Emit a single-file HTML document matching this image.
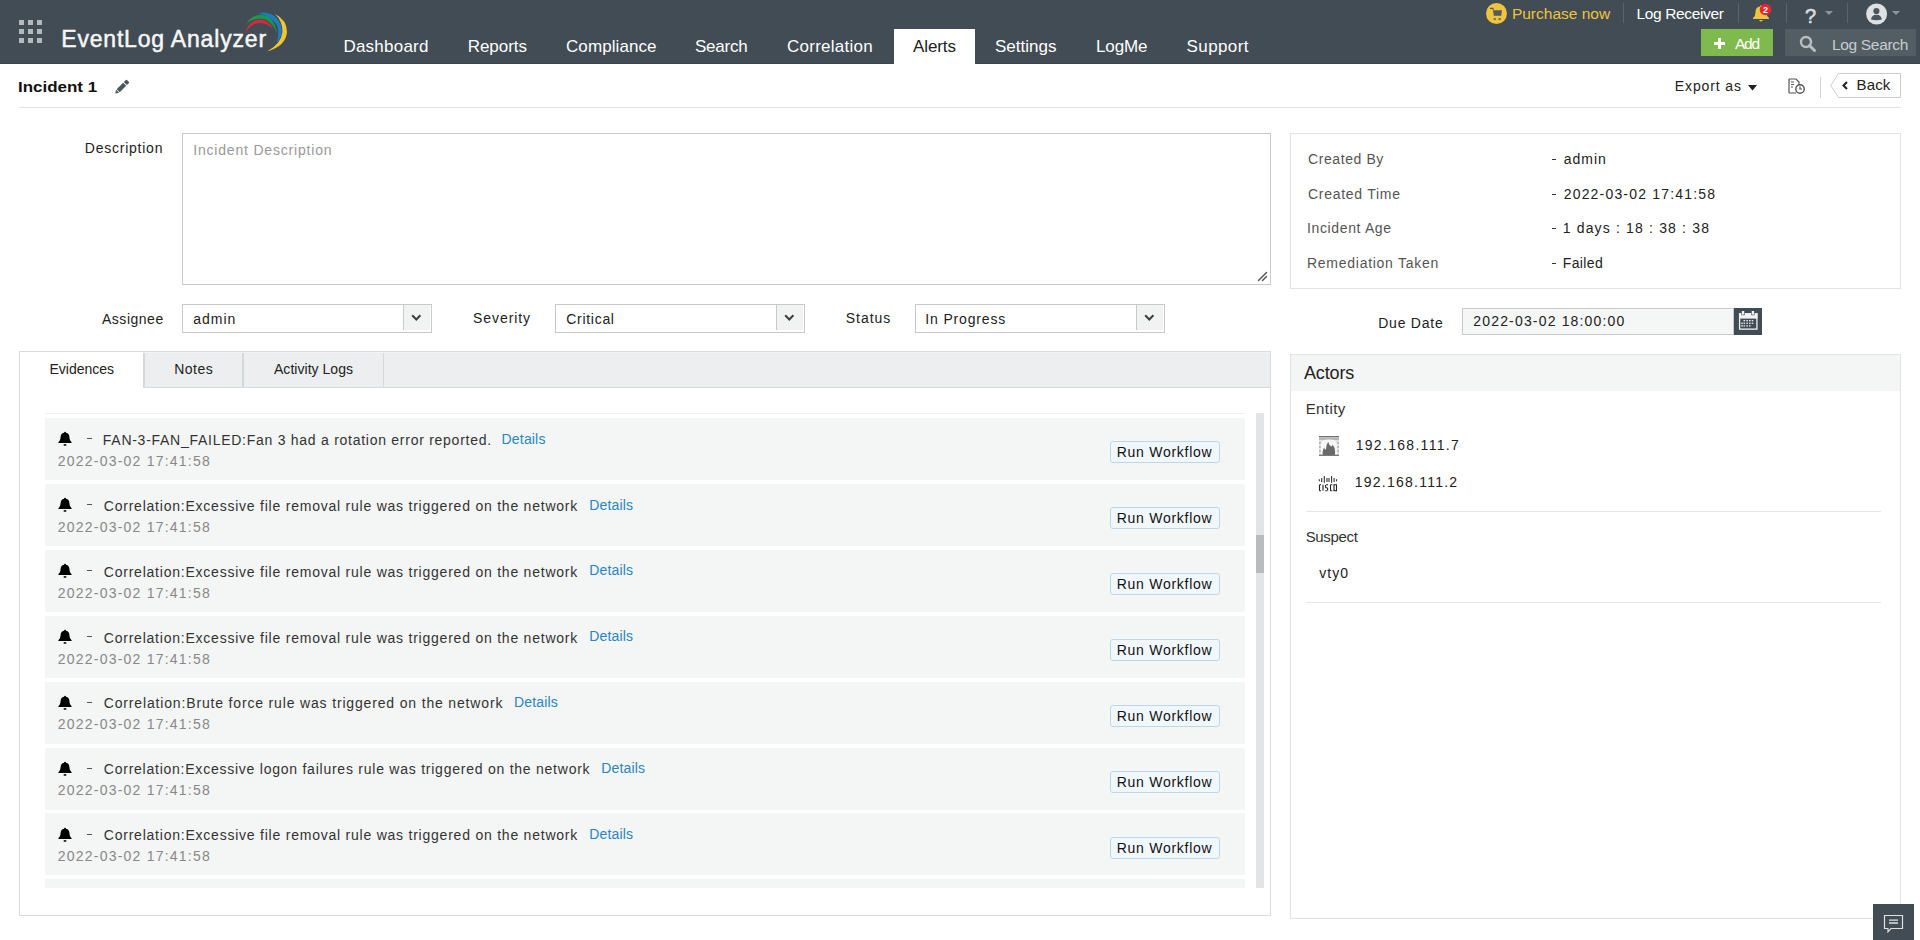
<!DOCTYPE html>
<html><head><meta charset="utf-8"><style>
html,body{margin:0;padding:0;width:1920px;height:940px;overflow:hidden;background:#fff;font-family:"Liberation Sans", sans-serif;}
.t{position:absolute;white-space:nowrap;line-height:1;}
.r{position:absolute;}
</style></head><body>
<div class="r" style="left:0px;top:0px;width:1920px;height:64px;background:#414c54"></div>
<div class="r" style="left:0px;top:63px;width:1920px;height:1px;background:#3a444b"></div>
<div class="r" style="left:19px;top:20px;width:5px;height:5px;background:#b4b9bc"></div>
<div class="r" style="left:28px;top:20px;width:5px;height:5px;background:#b4b9bc"></div>
<div class="r" style="left:37px;top:20px;width:5px;height:5px;background:#b4b9bc"></div>
<div class="r" style="left:19px;top:29px;width:5px;height:5px;background:#b4b9bc"></div>
<div class="r" style="left:28px;top:29px;width:5px;height:5px;background:#b4b9bc"></div>
<div class="r" style="left:37px;top:29px;width:5px;height:5px;background:#b4b9bc"></div>
<div class="r" style="left:19px;top:38px;width:5px;height:5px;background:#b4b9bc"></div>
<div class="r" style="left:28px;top:38px;width:5px;height:5px;background:#b4b9bc"></div>
<div class="r" style="left:37px;top:38px;width:5px;height:5px;background:#b4b9bc"></div>
<div class="t" style="left:61.25px;top:27.53px;font-size:23px;color:#f6f6f6;letter-spacing:0.812px;-webkit-text-stroke:0.5px #f6f6f6;">EventLog Analyzer</div>
<svg class="r" style="left:240px;top:8px" width="52" height="48" viewBox="240 8 52 48">
<path d="M245.3 34 Q248.5 20 259.5 19.6 Q268 19.5 273.5 29 Q267 23 259.5 23 Q250 23.5 245.3 34Z" fill="#d42a3c"/>
<path d="M246 24 Q252 14.8 261 14.8 Q273.5 15.3 277 33 Q271 19 261 18.6 Q252 18.3 246 24Z" fill="#169b4e"/>
<path d="M258 13 Q265 11.5 271 14 Q281 19 282 31 Q281.5 38 276.5 43 Q279 36 278 28.5 Q275 18 258 13Z" fill="#1b7cc0"/>
<path d="M275 14 Q287 20 287 32 Q286 46 267 51.5 Q281 44 282.5 32 Q282.5 21 275 14Z" fill="#f3c52e"/>
</svg>
<div class="r" style="left:894px;top:29px;width:81px;height:35px;background:#fff"></div>
<div class="t" style="left:343.40px;top:37.61px;font-size:17px;color:#fff;letter-spacing:0.238px;">Dashboard</div>
<div class="t" style="left:467.70px;top:37.61px;font-size:17px;color:#fff;letter-spacing:-0.033px;">Reports</div>
<div class="t" style="left:566.00px;top:37.61px;font-size:17px;color:#fff;letter-spacing:0.083px;">Compliance</div>
<div class="t" style="left:695.00px;top:37.61px;font-size:17px;color:#fff;letter-spacing:-0.250px;">Search</div>
<div class="t" style="left:787.00px;top:37.61px;font-size:17px;color:#fff;letter-spacing:0.250px;">Correlation</div>
<div class="t" style="left:913.00px;top:37.61px;font-size:17px;color:#222;letter-spacing:-0.100px;">Alerts</div>
<div class="t" style="left:995.00px;top:37.61px;font-size:17px;color:#fff;">Settings</div>
<div class="t" style="left:1096.00px;top:37.61px;font-size:17px;color:#fff;letter-spacing:-0.125px;">LogMe</div>
<div class="t" style="left:1186.50px;top:37.61px;font-size:17px;color:#fff;letter-spacing:0.417px;">Support</div>
<svg class="r" style="left:1486px;top:3px" width="22" height="22" viewBox="0 0 22 22">
<circle cx="10.5" cy="10.5" r="10.5" fill="#f0c43c"/>
<path d="M4 5.4 L6.8 5.4 L7.4 7" fill="none" stroke="#4f5a61" stroke-width="1.2"/>
<path d="M7 7.3 L16 7.3 L15.2 12.8 L7.8 12.8 Z" fill="#4f5a61"/>
<rect x="7.6" y="15.2" width="2.2" height="1.6" fill="#4f5a61"/><rect x="12.6" y="15.2" width="2.2" height="1.6" fill="#4f5a61"/>
</svg>
<div class="t" style="left:1511.90px;top:6.08px;font-size:15.5px;color:#f0c43c;">Purchase now</div>
<div class="r" style="left:1623px;top:3px;width:1px;height:20px;background:#5a646b"></div>
<div class="t" style="left:1636.50px;top:6.08px;font-size:15.5px;color:#fff;letter-spacing:-0.364px;">Log Receiver</div>
<div class="r" style="left:1738px;top:3px;width:1px;height:20px;background:#5a646b"></div>
<svg class="r" style="left:1750px;top:2px" width="24" height="22" viewBox="0 0 24 22">
<path d="M3 17 L3 16 Q5.5 14 5.5 10 Q5.5 5 10 4.5 L10 3.5 L12 3.5 L12 4.5 Q16.5 5 16.5 10 Q16.5 14 19 16 L19 17 Z" fill="#f0c43c"/>
<path d="M9 18 Q11 21 13 18Z" fill="#f0c43c"/>
<circle cx="15.5" cy="7.5" r="5.8" fill="#e8262f"/>
<text x="15.5" y="10.6" font-family="Liberation Sans" font-size="9" font-weight="700" fill="#fff" text-anchor="middle">2</text>
</svg>
<div class="r" style="left:1786px;top:3px;width:1px;height:20px;background:#5a646b"></div>
<div class="t" style="left:1805.00px;top:5.67px;font-size:20px;color:#d8dcdf;-webkit-text-stroke:0.6px #d8dcdf;">?</div>
<svg class="r" style="left:1825px;top:11px" width="10" height="5"><path d="M0 0 L8 0 L4 4Z" fill="#8d959a"/></svg>
<div class="r" style="left:1847px;top:3px;width:1px;height:20px;background:#5a646b"></div>
<svg class="r" style="left:1865px;top:2px" width="24" height="24" viewBox="0 0 24 24">
<circle cx="11.6" cy="12" r="10.5" fill="#dde1e4"/>
<circle cx="11.4" cy="9" r="3.1" fill="#4a555d"/>
<path d="M6 17.5 Q6.5 12.8 11.4 12.8 Q16.3 12.8 16.8 17.5 Q14.5 18.3 11.4 18.3 Q8.3 18.3 6 17.5Z" fill="#4a555d"/>
</svg>
<svg class="r" style="left:1892px;top:11px" width="10" height="5"><path d="M0 0 L8 0 L4 4Z" fill="#8d959a"/></svg>
<div class="r" style="left:1701px;top:29px;width:72px;height:27px;background:#7fba4f"></div>
<svg class="r" style="left:1714px;top:38px" width="11" height="11"><path d="M4 0h3v4h4v3h-4v4h-3v-4h-4v-3h4z" fill="#fff"/></svg>
<div class="t" style="left:1735.00px;top:36.38px;font-size:15.5px;color:#fff;letter-spacing:-1.250px;">Add</div>
<div class="r" style="left:1785px;top:29px;width:131px;height:27px;background:#525d64"></div>
<svg class="r" style="left:1799px;top:35px" width="18" height="18" viewBox="0 0 18 18">
<circle cx="7" cy="7" r="5" fill="none" stroke="#b9bec2" stroke-width="2.4"/>
<path d="M10.5 10.5 L15.5 15.5" stroke="#b9bec2" stroke-width="3" stroke-linecap="round"/>
</svg>
<div class="t" style="left:1832.00px;top:36.88px;font-size:15.5px;color:#c9cdd0;letter-spacing:-0.333px;">Log Search</div>
<div class="t" style="left:18.29px;top:80.15px;font-size:14px;color:#111;font-weight:700;transform:scaleX(1.2109);transform-origin:0 0;">Incident 1</div>
<svg class="r" style="left:110px;top:76px" width="24" height="24" viewBox="0 0 24 24"><path d="M5.30 17.60 L6.04 13.82 L9.08 16.86Z M6.68 13.18 L13.18 6.68 L16.22 9.72 L9.72 16.22Z M13.82 6.04 L16.22 3.63 L17.00 3.99 L18.91 5.90 L19.27 6.68 L16.86 9.08Z" fill="#4a555d"/></svg>
<div class="r" style="left:19px;top:107px;width:1882px;height:1px;background:#e0e0e0"></div>
<div class="t" style="left:1674.80px;top:79.45px;font-size:14px;color:#222;letter-spacing:0.875px;">Export as</div>
<svg class="r" style="left:1748px;top:85px" width="10" height="6"><path d="M0 0 L9 0 L4.5 5.5Z" fill="#222"/></svg>
<svg class="r" style="left:1788px;top:78px" width="18" height="16" viewBox="0 0 18 16">
<path d="M1 1 L8 1 L11 4 L11 7 M8 15 L1 15 Z" fill="none" stroke="#555" stroke-width="1.2"/>
<path d="M1 1 L1 15" stroke="#555" stroke-width="1.2"/>
<path d="M3 4h3M3 6.5h3M3 9h2" stroke="#555" stroke-width="1.2"/>
<circle cx="12" cy="11" r="4.2" fill="#fff" stroke="#555" stroke-width="1.4"/>
<path d="M12 8.5 L12 11 L14 11" fill="none" stroke="#555" stroke-width="1.2"/>
</svg>
<div class="r" style="left:1820px;top:77px;width:1px;height:21px;background:#d5d5d5"></div>
<svg class="r" style="left:1830px;top:73px" width="72" height="25" viewBox="0 0 72 25">
<path d="M8.5 0.5 L70.5 0.5 L70.5 24.5 L8.5 24.5 L0.8 12.5 Z" fill="#fff" stroke="#ccc" stroke-width="1"/>
<path d="M17 9 L13.5 12.5 L17 16" fill="none" stroke="#222" stroke-width="2"/>
</svg>
<div class="t" style="left:1856.50px;top:77.30px;font-size:15px;color:#222;letter-spacing:0.167px;">Back</div>
<div class="t" style="left:84.80px;top:141.35px;font-size:14px;color:#222;letter-spacing:0.760px;">Description</div>
<div class="r" style="left:182px;top:133px;width:1089px;height:152px;background:#fff;border:1px solid #c9c9c9;box-sizing:border-box"></div>
<div class="t" style="left:193.20px;top:143.35px;font-size:14px;color:#999;letter-spacing:0.811px;">Incident Description</div>
<svg class="r" style="left:1256px;top:270px" width="12" height="12"><path d="M10.5 2.5 L2.5 10.5 M10.5 6.5 L6.5 10.5" stroke="#555" stroke-width="1.5" stroke-linecap="round"/></svg>
<div class="t" style="left:102.00px;top:312.15px;font-size:14px;color:#222;letter-spacing:0.514px;">Assignee</div>
<div class="r" style="left:182px;top:304px;width:250px;height:29px;background:#fff;border:1px solid #c9c9c9;box-sizing:border-box"></div>
<div class="r" style="left:403px;top:304px;width:1px;height:26px;background:#c9c9c9"></div>
<div class="r" style="left:404px;top:305px;width:26px;height:25px;background:#f1f2f2"></div>
<svg class="r" style="left:411px;top:314px" width="12" height="8"><path d="M1.2 1.2 L5.3 5.5 L9.4 1.2" fill="none" stroke="#3a3f42" stroke-width="2"/></svg>
<div class="t" style="left:193.30px;top:312.15px;font-size:14px;color:#222;letter-spacing:0.950px;">admin</div>
<div class="t" style="left:473.10px;top:311.15px;font-size:14px;color:#222;letter-spacing:0.914px;">Severity</div>
<div class="r" style="left:555px;top:304px;width:250px;height:29px;background:#fff;border:1px solid #c9c9c9;box-sizing:border-box"></div>
<div class="r" style="left:776px;top:304px;width:1px;height:26px;background:#c9c9c9"></div>
<div class="r" style="left:777px;top:305px;width:26px;height:25px;background:#f1f2f2"></div>
<svg class="r" style="left:784px;top:314px" width="12" height="8"><path d="M1.2 1.2 L5.3 5.5 L9.4 1.2" fill="none" stroke="#3a3f42" stroke-width="2"/></svg>
<div class="t" style="left:566.30px;top:312.15px;font-size:14px;color:#222;letter-spacing:0.700px;">Critical</div>
<div class="t" style="left:845.80px;top:311.15px;font-size:14px;color:#222;letter-spacing:0.960px;">Status</div>
<div class="r" style="left:915px;top:304px;width:250px;height:29px;background:#fff;border:1px solid #c9c9c9;box-sizing:border-box"></div>
<div class="r" style="left:1136px;top:304px;width:1px;height:26px;background:#c9c9c9"></div>
<div class="r" style="left:1137px;top:305px;width:26px;height:25px;background:#f1f2f2"></div>
<svg class="r" style="left:1144px;top:314px" width="12" height="8"><path d="M1.2 1.2 L5.3 5.5 L9.4 1.2" fill="none" stroke="#3a3f42" stroke-width="2"/></svg>
<div class="t" style="left:925.30px;top:312.15px;font-size:14px;color:#222;letter-spacing:0.840px;">In Progress</div>
<div class="r" style="left:1290px;top:133px;width:611px;height:156px;border:1px solid #e3e3e3;box-sizing:border-box"></div>
<div class="t" style="left:1308.00px;top:152.45px;font-size:14px;color:#555;letter-spacing:0.589px;">Created By</div>
<div class="r" style="left:1552px;top:159px;width:4px;height:1px;background:#333"></div>
<div class="t" style="left:1563.70px;top:152.45px;font-size:14px;color:#222;letter-spacing:1.000px;">admin</div>
<div class="t" style="left:1308.00px;top:187.15px;font-size:14px;color:#555;letter-spacing:0.718px;">Created Time</div>
<div class="r" style="left:1552px;top:194px;width:4px;height:1px;background:#333"></div>
<div class="t" style="left:1563.70px;top:187.15px;font-size:14px;color:#222;letter-spacing:1.183px;">2022-03-02 17:41:58</div>
<div class="t" style="left:1307.00px;top:221.35px;font-size:14px;color:#555;letter-spacing:0.636px;">Incident Age</div>
<div class="r" style="left:1552px;top:228px;width:4px;height:1px;background:#333"></div>
<div class="t" style="left:1562.70px;top:221.35px;font-size:14px;color:#222;letter-spacing:1.165px;">1 days : 18 : 38 : 38</div>
<div class="t" style="left:1307.00px;top:256.45px;font-size:14px;color:#555;letter-spacing:0.731px;">Remediation Taken</div>
<div class="r" style="left:1552px;top:263px;width:4px;height:1px;background:#333"></div>
<div class="t" style="left:1562.70px;top:256.45px;font-size:14px;color:#222;letter-spacing:0.400px;">Failed</div>
<div class="t" style="left:1378.20px;top:316.45px;font-size:14px;color:#222;letter-spacing:0.771px;">Due Date</div>
<div class="r" style="left:1462px;top:308px;width:272px;height:27px;background:#f5f6f6;border:1px solid #c9c9c9;box-sizing:border-box"></div>
<div class="r" style="left:1734px;top:308px;width:28px;height:27px;background:#414c54"></div>
<svg class="r" style="left:1734px;top:308px" width="28" height="27" viewBox="0 0 28 27">
<rect x="5.6" y="5.8" width="17.3" height="15.3" fill="none" stroke="#f2f2f2" stroke-width="1.3"/>
<rect x="5" y="5.3" width="18.5" height="5.3" fill="#f2f2f2"/>
<rect x="7.3" y="2.6" width="3.4" height="4.6" fill="#414c54"/><rect x="17.2" y="2.6" width="3.4" height="4.6" fill="#414c54"/>
<rect x="7.8" y="3" width="2.4" height="3.6" fill="#f2f2f2"/><rect x="17.7" y="3" width="2.4" height="3.6" fill="#f2f2f2"/>
<g fill="#e8eaeb">
<rect x="9.5" y="12" width="1.6" height="1.3"/><rect x="12.3" y="12" width="1.6" height="1.3"/><rect x="15" y="12" width="1.6" height="1.3"/><rect x="17.7" y="12" width="1.6" height="1.3"/>
<rect x="7.2" y="14.6" width="1.6" height="1.3"/><rect x="9.5" y="14.6" width="1.6" height="1.3"/><rect x="12.3" y="14.6" width="1.6" height="1.3"/><rect x="15" y="14.6" width="1.6" height="1.3"/><rect x="17.7" y="14.6" width="1.6" height="1.3"/>
<rect x="7.2" y="17.2" width="1.6" height="1.3"/><rect x="9.5" y="17.2" width="1.6" height="1.3"/><rect x="12.3" y="17.2" width="1.6" height="1.3"/><rect x="15" y="17.2" width="1.6" height="1.3"/>
</g>
</svg>
<div class="t" style="left:1473.30px;top:313.95px;font-size:14px;color:#222;letter-spacing:1.167px;">2022-03-02 18:00:00</div>
<div class="r" style="left:1290px;top:354px;width:611px;height:565px;border:1px solid #e3e3e3;box-sizing:border-box"></div>
<div class="r" style="left:1291px;top:355px;width:609px;height:36px;background:#f4f5f5"></div>
<div class="t" style="left:1304.00px;top:364.06px;font-size:18px;color:#222;letter-spacing:-0.140px;">Actors</div>
<div class="t" style="left:1305.70px;top:401.30px;font-size:15px;color:#333;letter-spacing:0.400px;">Entity</div>
<svg class="r" style="left:1319px;top:436px" width="20" height="20" viewBox="0 0 20 20">
<rect x="0" y="0" width="20" height="20" rx="1" fill="#e2e2e2"/>
<rect x="0" y="0" width="20" height="1.3" fill="#707070"/>
<path d="M0 3h20M0 7h3M17 7h3M0 11h2.5M17.5 11h2.5M0 15h3M17 15h3" stroke="#8a8a8a" stroke-width="1.1"/>
<path d="M1.8 19 L1.8 7.5 Q2.5 3.6 10 3.6 Q17.5 3.6 18.2 7.5 L18.2 19Z" fill="#f6f6f6"/>
<rect x="0" y="18.6" width="20" height="1.4" fill="#7a7a7a"/>
<path d="M3.8 19 Q3.2 14 5.2 11.5 Q5.8 14.5 7 13 Q7.2 8.5 9.2 5.8 Q10 9.5 11.8 10 Q12.6 11.5 13.6 8.8 Q17 12.5 15.8 19Z" fill="#6a6a6a"/>
</svg>
<div class="t" style="left:1355.70px;top:438.15px;font-size:14px;color:#222;letter-spacing:1.300px;">192.168.111.7</div>
<svg class="r" style="left:1318px;top:475px" width="21" height="17" viewBox="0 0 21 17">
<path d="M1.3 4.2v2M3.7 3v4M6.3 1v6.8M9 3v4M11 3v4M13.6 1v6.8M16.1 3v4M18.5 4.2v2" stroke="#333" stroke-width="1.1"/>
<path d="M1.5 9.8 L1.5 15.8 M1.5 9.8h1.5M1.5 15.8h1.5 M5 9.8v6 M7.5 10v2.5 M8 9.8h2 M7.2 15.8h2 M9.6 13v2.5 M7.5 12.8h2 M12.5 9.8v6 M12.5 9.8h1.8 M12.5 15.8h1.8 M16 9.8h2.5v6h-2.5z" fill="none" stroke="#222" stroke-width="1.1"/>
</svg>
<div class="t" style="left:1354.70px;top:475.45px;font-size:14px;color:#222;letter-spacing:1.250px;">192.168.111.2</div>
<div class="r" style="left:1306px;top:511px;width:575px;height:1px;background:#e6e6e6"></div>
<div class="t" style="left:1305.70px;top:529.00px;font-size:15px;color:#333;letter-spacing:-0.333px;">Suspect</div>
<div class="t" style="left:1319.30px;top:566.45px;font-size:14px;color:#222;letter-spacing:1.000px;">vty0</div>
<div class="r" style="left:1306px;top:602px;width:575px;height:1px;background:#e6e6e6"></div>
<div class="r" style="left:19px;top:351px;width:1252px;height:565px;border:1px solid #d8dcde;box-sizing:border-box"></div>
<div class="r" style="left:20px;top:352px;width:1250px;height:36px;background:#eceeef;border-bottom:1px solid #d5dadd;box-sizing:border-box"></div>
<div class="r" style="left:20px;top:352px;width:123px;height:36px;background:#fff"></div>
<div class="r" style="left:143px;top:352px;width:1127px;height:1px;background:#f2f3f4"></div>
<div class="r" style="left:143px;top:353px;width:2px;height:34px;background:#d3d8db"></div>
<div class="r" style="left:242px;top:353px;width:2px;height:34px;background:#d3d8db"></div>
<div class="r" style="left:383px;top:353px;width:1px;height:34px;background:#d3d8db"></div>
<div class="t" style="left:49.50px;top:361.75px;font-size:14px;color:#222;letter-spacing:-0.012px;">Evidences</div>
<div class="t" style="left:174.30px;top:361.75px;font-size:14px;color:#222;letter-spacing:0.450px;">Notes</div>
<div class="t" style="left:274.00px;top:361.75px;font-size:14px;color:#222;letter-spacing:0.033px;">Activity Logs</div>
<div class="r" style="left:45px;top:413px;width:1200px;height:1px;background:#eef0f0"></div>
<div class="r" style="left:45px;top:418px;width:1200px;height:62px;background:#f4f5f5"></div>
<svg class="r" style="left:58px;top:431.20px" width="14" height="16" viewBox="0 0 14 16">
<path d="M0.4 12.1 L0.4 11.3 Q2.6 9.6 2.6 6.3 Q2.6 2.4 6 1.8 L6.3 0.9 Q7 0.5 7.7 0.9 L8 1.8 Q11.4 2.4 11.4 6.3 Q11.4 9.6 13.6 11.3 L13.6 12.1Z" fill="#000"/>
<ellipse cx="7" cy="13.9" rx="1.5" ry="0.9" fill="#111"/></svg>
<div class="r" style="left:87px;top:438px;width:5px;height:1px;background:#555"></div>
<div class="t" style="left:102.80px;top:433.25px;font-size:14px;color:#333;letter-spacing:0.733px;">FAN-3-FAN_FAILED:Fan 3 had a rotation error reported.</div>
<div class="t" style="left:501.60px;top:431.75px;font-size:14px;color:#2a86c2;letter-spacing:0.167px;">Details</div>
<div class="t" style="left:57.80px;top:454.15px;font-size:14px;color:#888;letter-spacing:1.217px;">2022-03-02 17:41:58</div>
<div class="r" style="left:1110px;top:441px;width:110px;height:22px;background:#f1f8fd;border:1px solid #bcd6ea;border-radius:3px;box-sizing:border-box"></div>
<div class="t" style="left:1116.70px;top:445.15px;font-size:14px;color:#111;letter-spacing:0.736px;">Run Workflow</div>
<div class="r" style="left:45px;top:484px;width:1200px;height:62px;background:#f4f5f5"></div>
<svg class="r" style="left:58px;top:497.10px" width="14" height="16" viewBox="0 0 14 16">
<path d="M0.4 12.1 L0.4 11.3 Q2.6 9.6 2.6 6.3 Q2.6 2.4 6 1.8 L6.3 0.9 Q7 0.5 7.7 0.9 L8 1.8 Q11.4 2.4 11.4 6.3 Q11.4 9.6 13.6 11.3 L13.6 12.1Z" fill="#000"/>
<ellipse cx="7" cy="13.9" rx="1.5" ry="0.9" fill="#111"/></svg>
<div class="r" style="left:87px;top:504px;width:5px;height:1px;background:#555"></div>
<div class="t" style="left:103.80px;top:499.05px;font-size:14px;color:#333;letter-spacing:0.772px;">Correlation:Excessive file removal rule was triggered on the network</div>
<div class="t" style="left:589.20px;top:497.55px;font-size:14px;color:#2a86c2;letter-spacing:0.167px;">Details</div>
<div class="t" style="left:57.80px;top:519.95px;font-size:14px;color:#888;letter-spacing:1.217px;">2022-03-02 17:41:58</div>
<div class="r" style="left:1110px;top:507px;width:110px;height:22px;background:#f1f8fd;border:1px solid #bcd6ea;border-radius:3px;box-sizing:border-box"></div>
<div class="t" style="left:1116.70px;top:511.05px;font-size:14px;color:#111;letter-spacing:0.736px;">Run Workflow</div>
<div class="r" style="left:45px;top:550px;width:1200px;height:62px;background:#f4f5f5"></div>
<svg class="r" style="left:58px;top:563.00px" width="14" height="16" viewBox="0 0 14 16">
<path d="M0.4 12.1 L0.4 11.3 Q2.6 9.6 2.6 6.3 Q2.6 2.4 6 1.8 L6.3 0.9 Q7 0.5 7.7 0.9 L8 1.8 Q11.4 2.4 11.4 6.3 Q11.4 9.6 13.6 11.3 L13.6 12.1Z" fill="#000"/>
<ellipse cx="7" cy="13.9" rx="1.5" ry="0.9" fill="#111"/></svg>
<div class="r" style="left:87px;top:570px;width:5px;height:1px;background:#555"></div>
<div class="t" style="left:103.80px;top:564.85px;font-size:14px;color:#333;letter-spacing:0.772px;">Correlation:Excessive file removal rule was triggered on the network</div>
<div class="t" style="left:589.20px;top:563.35px;font-size:14px;color:#2a86c2;letter-spacing:0.167px;">Details</div>
<div class="t" style="left:57.80px;top:585.75px;font-size:14px;color:#888;letter-spacing:1.217px;">2022-03-02 17:41:58</div>
<div class="r" style="left:1110px;top:573px;width:110px;height:22px;background:#f1f8fd;border:1px solid #bcd6ea;border-radius:3px;box-sizing:border-box"></div>
<div class="t" style="left:1116.70px;top:576.95px;font-size:14px;color:#111;letter-spacing:0.736px;">Run Workflow</div>
<div class="r" style="left:45px;top:616px;width:1200px;height:62px;background:#f4f5f5"></div>
<svg class="r" style="left:58px;top:628.90px" width="14" height="16" viewBox="0 0 14 16">
<path d="M0.4 12.1 L0.4 11.3 Q2.6 9.6 2.6 6.3 Q2.6 2.4 6 1.8 L6.3 0.9 Q7 0.5 7.7 0.9 L8 1.8 Q11.4 2.4 11.4 6.3 Q11.4 9.6 13.6 11.3 L13.6 12.1Z" fill="#000"/>
<ellipse cx="7" cy="13.9" rx="1.5" ry="0.9" fill="#111"/></svg>
<div class="r" style="left:87px;top:636px;width:5px;height:1px;background:#555"></div>
<div class="t" style="left:103.80px;top:630.65px;font-size:14px;color:#333;letter-spacing:0.772px;">Correlation:Excessive file removal rule was triggered on the network</div>
<div class="t" style="left:589.20px;top:629.15px;font-size:14px;color:#2a86c2;letter-spacing:0.167px;">Details</div>
<div class="t" style="left:57.80px;top:651.55px;font-size:14px;color:#888;letter-spacing:1.217px;">2022-03-02 17:41:58</div>
<div class="r" style="left:1110px;top:639px;width:110px;height:22px;background:#f1f8fd;border:1px solid #bcd6ea;border-radius:3px;box-sizing:border-box"></div>
<div class="t" style="left:1116.70px;top:642.85px;font-size:14px;color:#111;letter-spacing:0.736px;">Run Workflow</div>
<div class="r" style="left:45px;top:682px;width:1200px;height:62px;background:#f4f5f5"></div>
<svg class="r" style="left:58px;top:694.80px" width="14" height="16" viewBox="0 0 14 16">
<path d="M0.4 12.1 L0.4 11.3 Q2.6 9.6 2.6 6.3 Q2.6 2.4 6 1.8 L6.3 0.9 Q7 0.5 7.7 0.9 L8 1.8 Q11.4 2.4 11.4 6.3 Q11.4 9.6 13.6 11.3 L13.6 12.1Z" fill="#000"/>
<ellipse cx="7" cy="13.9" rx="1.5" ry="0.9" fill="#111"/></svg>
<div class="r" style="left:87px;top:702px;width:5px;height:1px;background:#555"></div>
<div class="t" style="left:103.80px;top:696.45px;font-size:14px;color:#333;letter-spacing:0.837px;">Correlation:Brute force rule was triggered on the network</div>
<div class="t" style="left:514.00px;top:694.95px;font-size:14px;color:#2a86c2;letter-spacing:0.167px;">Details</div>
<div class="t" style="left:57.80px;top:717.35px;font-size:14px;color:#888;letter-spacing:1.217px;">2022-03-02 17:41:58</div>
<div class="r" style="left:1110px;top:705px;width:110px;height:22px;background:#f1f8fd;border:1px solid #bcd6ea;border-radius:3px;box-sizing:border-box"></div>
<div class="t" style="left:1116.70px;top:708.75px;font-size:14px;color:#111;letter-spacing:0.736px;">Run Workflow</div>
<div class="r" style="left:45px;top:748px;width:1200px;height:62px;background:#f4f5f5"></div>
<svg class="r" style="left:58px;top:760.70px" width="14" height="16" viewBox="0 0 14 16">
<path d="M0.4 12.1 L0.4 11.3 Q2.6 9.6 2.6 6.3 Q2.6 2.4 6 1.8 L6.3 0.9 Q7 0.5 7.7 0.9 L8 1.8 Q11.4 2.4 11.4 6.3 Q11.4 9.6 13.6 11.3 L13.6 12.1Z" fill="#000"/>
<ellipse cx="7" cy="13.9" rx="1.5" ry="0.9" fill="#111"/></svg>
<div class="r" style="left:87px;top:768px;width:5px;height:1px;background:#555"></div>
<div class="t" style="left:103.80px;top:762.25px;font-size:14px;color:#333;letter-spacing:0.759px;">Correlation:Excessive logon failures rule was triggered on the network</div>
<div class="t" style="left:601.30px;top:760.75px;font-size:14px;color:#2a86c2;letter-spacing:0.167px;">Details</div>
<div class="t" style="left:57.80px;top:783.15px;font-size:14px;color:#888;letter-spacing:1.217px;">2022-03-02 17:41:58</div>
<div class="r" style="left:1110px;top:771px;width:110px;height:22px;background:#f1f8fd;border:1px solid #bcd6ea;border-radius:3px;box-sizing:border-box"></div>
<div class="t" style="left:1116.70px;top:774.65px;font-size:14px;color:#111;letter-spacing:0.736px;">Run Workflow</div>
<div class="r" style="left:45px;top:813px;width:1200px;height:62px;background:#f4f5f5"></div>
<svg class="r" style="left:58px;top:826.60px" width="14" height="16" viewBox="0 0 14 16">
<path d="M0.4 12.1 L0.4 11.3 Q2.6 9.6 2.6 6.3 Q2.6 2.4 6 1.8 L6.3 0.9 Q7 0.5 7.7 0.9 L8 1.8 Q11.4 2.4 11.4 6.3 Q11.4 9.6 13.6 11.3 L13.6 12.1Z" fill="#000"/>
<ellipse cx="7" cy="13.9" rx="1.5" ry="0.9" fill="#111"/></svg>
<div class="r" style="left:87px;top:834px;width:5px;height:1px;background:#555"></div>
<div class="t" style="left:103.80px;top:828.05px;font-size:14px;color:#333;letter-spacing:0.772px;">Correlation:Excessive file removal rule was triggered on the network</div>
<div class="t" style="left:589.20px;top:826.55px;font-size:14px;color:#2a86c2;letter-spacing:0.167px;">Details</div>
<div class="t" style="left:57.80px;top:848.95px;font-size:14px;color:#888;letter-spacing:1.217px;">2022-03-02 17:41:58</div>
<div class="r" style="left:1110px;top:837px;width:110px;height:22px;background:#f1f8fd;border:1px solid #bcd6ea;border-radius:3px;box-sizing:border-box"></div>
<div class="t" style="left:1116.70px;top:840.55px;font-size:14px;color:#111;letter-spacing:0.736px;">Run Workflow</div>
<div class="r" style="left:45px;top:879px;width:1200px;height:9px;background:#f4f5f5"></div>
<div class="r" style="left:1256px;top:413px;width:8px;height:475px;background:#e3e4e5"></div>
<div class="r" style="left:1256px;top:535px;width:8px;height:38px;background:#b8bcbf"></div>
<div class="r" style="left:1873px;top:904px;width:41px;height:36px;background:#414c54"></div>
<svg class="r" style="left:1883px;top:914px" width="22" height="20" viewBox="0 0 22 20">
<path d="M1.5 1.5 L19.5 1.5 L19.5 14.5 L8 14.5 L5 17.8 L5 14.5 L1.5 14.5Z" fill="none" stroke="#e0e0e0" stroke-width="1.2"/>
<path d="M6 6.2h9M6 9h9" stroke="#e0e0e0" stroke-width="1.3"/>
</svg>
</body></html>
